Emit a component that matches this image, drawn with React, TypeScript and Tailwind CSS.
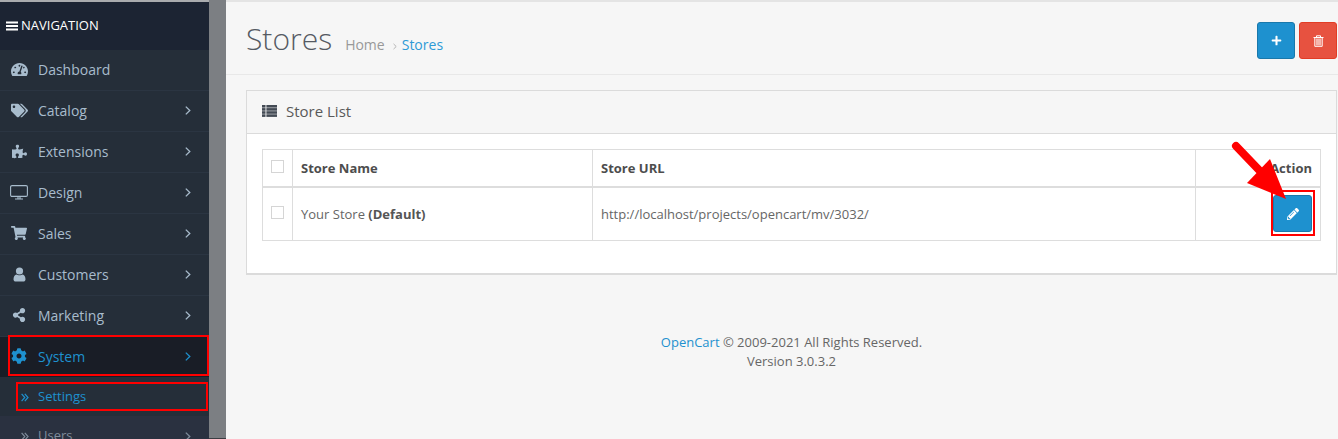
import { FaTachometerAlt, FaTags, FaPuzzlePiece, FaShoppingCart, FaShareAlt, FaCog, FaPlus, FaPencilAlt } from "react-icons/fa";
import type { ReactNode } from "react";

function Chevron({ className = "" }: { className?: string }) {
  return (
    <svg className={className} width="6" height="9" viewBox="0 0 6 9" fill="none" stroke="currentColor" strokeWidth="1.3">
      <path d="M0.8 0.6 L4.8 4.5 L0.8 8.4" />
    </svg>
  );
}

function DoubleChevron({ className = "" }: { className?: string }) {
  return (
    <svg className={className} width="8" height="9" viewBox="0 0 8 9" fill="none" stroke="currentColor" strokeWidth="1.2">
      <path d="M0.6 0.8 L3.8 4.5 L0.6 8.2 M3.8 0.8 L7 4.5 L3.8 8.2" />
    </svg>
  );
}

function UserIcon() {
  return (
    <svg width="13" height="15" viewBox="0 0 13 15" fill="currentColor">
      <circle cx="6.5" cy="4" r="3.6" />
      <path d="M0.5 12.2 C0.5 9.4 1.8 7.8 3.4 7.4 C4.8 8.5 8.2 8.5 9.6 7.4 C11.2 7.8 12.5 9.4 12.5 12.2 C12.5 13.8 11.5 14.6 10.2 14.6 L2.8 14.6 C1.5 14.6 0.5 13.8 0.5 12.2 Z" />
    </svg>
  );
}

function MonitorIcon() {
  return (
    <svg width="18" height="15" viewBox="0 0 18 15" fill="none" stroke="currentColor" strokeWidth="1.1">
      <rect x="0.6" y="0.6" width="16.8" height="10.8" rx="1.4" />
      <path d="M8 11.5 V13.6 M10 11.5 V13.6 M5 14 H13" />
    </svg>
  );
}

function ThList() {
  return (
    <svg width="15" height="12" viewBox="0 0 15 12" fill="#444b55">
      <rect x="0" y="0" width="3.5" height="2.6" />
      <rect x="4.4" y="0" width="10.6" height="2.6" />
      <rect x="0" y="3.1" width="3.5" height="2.6" />
      <rect x="4.4" y="3.1" width="10.6" height="2.6" />
      <rect x="0" y="6.2" width="3.5" height="2.6" />
      <rect x="4.4" y="6.2" width="10.6" height="2.6" />
      <rect x="0" y="9.3" width="3.5" height="2.6" />
      <rect x="4.4" y="9.3" width="10.6" height="2.6" />
    </svg>
  );
}

function TrashIcon() {
  return (
    <svg width="11" height="12" viewBox="0 0 11 12" fill="none" stroke="#fff" strokeWidth="1">
      <path d="M0.5 2.5 H10.5 M3.5 2.5 V0.8 H7.5 V2.5" />
      <path d="M1.8 2.5 V11.3 H9.2 V2.5" />
      <rect x="2.8" y="3.5" width="5.4" height="7" fill="#f5b8b0" stroke="none" />
    </svg>
  );
}

function Item({ icon, label, arrow = true }: { icon: ReactNode; label: string; arrow?: boolean }) {
  return (
    <div className="flex h-[41px] items-center border-b border-[#2b3542] pb-[2px] text-[14px] text-[#a8bccd]">
      <span className="flex w-[38px] shrink-0 justify-center text-[#a8bccd]">{icon}</span>
      <span className="flex-1">{label}</span>
      {arrow && <Chevron className="mr-[18px]" />}
    </div>
  );
}

export default function App() {
  return (
    <div className="relative flex h-[439px] w-[1338px] overflow-hidden bg-[#f6f6f6] text-[13px] text-[#666]" style={{ fontFamily: '"Open Sans", sans-serif' }}>
      <aside className="w-[209px] shrink-0 border-t-2 border-[#a9abae] bg-[#252e39]">
        <div className="flex h-[48px] items-center gap-[3px] bg-[#1c2433] pl-[6px] text-[13px] text-white">
          <svg width="12" height="10" viewBox="0 0 12 10" fill="#fff">
            <rect y="0.5" width="12" height="2" />
            <rect y="4" width="12" height="2" />
            <rect y="7.5" width="12" height="2" />
          </svg>
          <span>NAVIGATION</span>
        </div>
        <Item icon={<FaTachometerAlt className="text-[17px]" />} label="Dashboard" arrow={false} />
        <Item icon={<FaTags className="text-[17px]" />} label="Catalog" />
        <Item icon={<FaPuzzlePiece className="text-[15px]" />} label="Extensions" />
        <Item icon={<MonitorIcon />} label="Design" />
        <Item icon={<FaShoppingCart className="text-[16px]" />} label="Sales" />
        <Item icon={<UserIcon />} label="Customers" />
        <Item icon={<FaShareAlt className="text-[14px]" />} label="Marketing" />
        <div className="flex h-[40px] items-center bg-[#191d26] pb-[2px] text-[14px] text-[#1e91cf]">
          <span className="flex w-[38px] justify-center"><FaCog className="text-[16px]" /></span>
          <span className="flex-1">System</span>
          <Chevron className="mr-[18px]" />
        </div>
        <div className="flex h-[39px] items-center pt-[1px] text-[13px] text-[#1e91cf]">
          <DoubleChevron className="ml-[21px] mr-[9px]" />
          <span>Settings</span>
        </div>
        <div className="flex h-[40px] items-center bg-[#2a3140] text-[13px] text-[#7f8c9b]">
          <DoubleChevron className="ml-[21px] mr-[9px]" />
          <span className="flex-1">Users</span>
          <Chevron className="mr-[18px]" />
        </div>
      </aside>
      <div className="w-[17px] shrink-0 border-b border-[#3a3d42] bg-[#7c7f83]" />
      <main className="flex-1">
        <div className="flex h-[75px] items-start justify-between border-b border-t-2 border-b-[#e8e8e8] border-t-[#e4e4e4] pl-[20px] pr-[1px]">
          <div className="flex items-baseline pt-[17px]">
            <h1 className="text-[30px] font-light leading-[40px] text-[#555a63]">Stores</h1>
            <span className="ml-[13px] text-[14px] text-[#999]">Home</span>
            <Chevron className="ml-[8px] mr-[5px] h-[7px] w-[4px] text-[#aaa]" />
            <span className="text-[14px] text-[#2d9ad6]">Stores</span>
          </div>
          <div className="mt-[20px] flex gap-[4px]">
            <button className="flex h-[37px] w-[38px] items-center justify-center rounded-[3px] border border-[#1978ab] bg-[#1e91cf] text-[11px] text-white"><FaPlus /></button>
            <button className="flex h-[37px] w-[38px] items-center justify-center rounded-[3px] border border-[#e23c25] bg-[#e75240]"><TrashIcon /></button>
          </div>
        </div>
        <div className="pl-[20px] pr-[1px] pt-[15px]">
          <div className="h-[185px] border border-b-2 border-[#dbdbdb] bg-white">
            <div className="flex h-[43px] items-center border-b border-[#dbdbdb] bg-[#f6f6f6] pb-[2px] pl-[15px] text-[15px] text-[#595959]">
              <span className="mr-[9px]"><ThList /></span>
              <span>Store List</span>
            </div>
            <div className="px-[15px] pt-[15px]">
              <table className="w-full table-fixed border-collapse text-[13px] text-[#666]">
                <colgroup>
                  <col className="w-[30px]" />
                  <col className="w-[300px]" />
                  <col className="w-[603px]" />
                  <col />
                </colgroup>
                <thead>
                  <tr className="h-[37px] border-b-2 border-[#dddddd]">
                    <td className="border border-b-2 border-[#dddddd] pl-[8px]"><div className="mb-[3px] h-[13px] w-[13px] border border-[#d5d5d5]" /></td>
                    <td className="border border-b-2 border-[#dddddd] pl-[8px] pt-[2px] font-bold text-[#4d4d4d]">Store Name</td>
                    <td className="border border-b-2 border-[#dddddd] pl-[8px] pt-[2px] font-bold text-[#4d4d4d]">Store URL</td>
                    <td className="border border-b-2 border-[#dddddd] pr-[8px] pt-[2px] text-right font-bold text-[#4d4d4d]">Action</td>
                  </tr>
                </thead>
                <tbody>
                  <tr className="h-[54px]">
                    <td className="border border-[#dddddd] pl-[8px]"><div className="mb-[3px] h-[13px] w-[13px] border border-[#d5d5d5]" /></td>
                    <td className="border border-[#dddddd] pl-[8px] pt-[2px]">Your Store <b className="text-[#555]">(Default)</b></td>
                    <td className="border border-[#dddddd] pl-[8px] pt-[2px]">http://localhost/projects/opencart/mv/3032/</td>
                    <td className="border border-[#dddddd] pr-[8px]">
                      <div className="flex justify-end">
                        <button className="flex h-[37px] w-[39px] items-center justify-center rounded-[3px] border border-[#1978ab] bg-[#1e91cf] text-[12px] text-white"><FaPencilAlt /></button>
                      </div>
                    </td>
                  </tr>
                </tbody>
              </table>
            </div>
          </div>
        </div>
        <div className="pl-[19px] pt-[58px] text-center text-[13px] leading-[19px] text-[#666]">
          <div><span className="text-[#1e91cf]">OpenCart</span> © 2009-2021 All Rights Reserved.</div>
          <div>Version 3.0.3.2</div>
        </div>
      </main>
      <div className="absolute left-[8px] top-[335px] h-[41px] w-[201px] border-2 border-[#ff0000]" />
      <div className="absolute left-[16px] top-[382px] h-[29px] w-[192px] border-2 border-[#ff0000]" />
      <div className="absolute left-[1271px] top-[190px] h-[46px] w-[44px] border-2 border-[#ff0000]" />
      <svg className="absolute left-[1225px] top-[138px]" width="70" height="72" viewBox="0 0 70 72">
        <path d="M11 8 L34 32" stroke="#ff0000" strokeWidth="8" strokeLinecap="round" />
        <path d="M45 21 L22 45 L61 61 Z" fill="#ff0000" />
      </svg>
    </div>
  );
}
